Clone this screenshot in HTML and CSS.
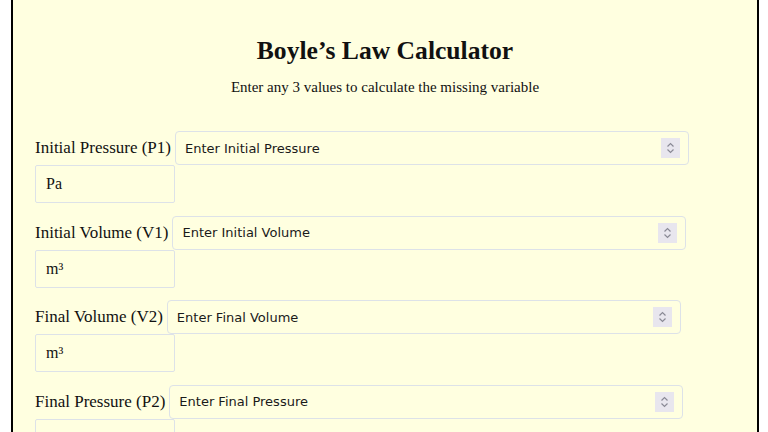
FILE: index.html
```html
<!DOCTYPE html>
<html lang="en">
<head>
    <meta charset="UTF-8">
    <meta name="viewport" content="width=device-width, initial-scale=1.0">
    <title>Boyle's Law Calculator</title>
    <link rel="stylesheet" href="styles.css">
</head>
<body>
    <div class="calculator">
        <h2>Boyle’s Law Calculator</h2>
        <p class="subtitle">Enter any 3 values to calculate the missing variable</p>

        <div class="group">
            <div class="line">
                <label for="p1">Initial Pressure (P1)</label>
                <div class="field">
                    <input type="text" id="p1" placeholder="Enter Initial Pressure">
                    <span class="spin"><svg viewBox="0 0 19 20" width="19" height="20"><path d="M6.5 8.5 9.5 5.5 12.5 8.5M6.5 11.5 9.5 14.5 12.5 11.5" fill="none" stroke="#8a8a96" stroke-width="1.2"/></svg></span>
                </div>
            </div>
            <div class="unit">Pa</div>
        </div>

        <div class="group">
            <div class="line">
                <label for="v1">Initial Volume (V1)</label>
                <div class="field">
                    <input type="text" id="v1" placeholder="Enter Initial Volume">
                    <span class="spin"><svg viewBox="0 0 19 20" width="19" height="20"><path d="M6.5 8.5 9.5 5.5 12.5 8.5M6.5 11.5 9.5 14.5 12.5 11.5" fill="none" stroke="#8a8a96" stroke-width="1.2"/></svg></span>
                </div>
            </div>
            <div class="unit">m³</div>
        </div>

        <div class="group">
            <div class="line">
                <label for="v2">Final Volume (V2)</label>
                <div class="field">
                    <input type="text" id="v2" placeholder="Enter Final Volume">
                    <span class="spin"><svg viewBox="0 0 19 20" width="19" height="20"><path d="M6.5 8.5 9.5 5.5 12.5 8.5M6.5 11.5 9.5 14.5 12.5 11.5" fill="none" stroke="#8a8a96" stroke-width="1.2"/></svg></span>
                </div>
            </div>
            <div class="unit">m³</div>
        </div>

        <div class="group">
            <div class="line">
                <label for="p2">Final Pressure (P2)</label>
                <div class="field">
                    <input type="text" id="p2" placeholder="Enter Final Pressure">
                    <span class="spin"><svg viewBox="0 0 19 20" width="19" height="20"><path d="M6.5 8.5 9.5 5.5 12.5 8.5M6.5 11.5 9.5 14.5 12.5 11.5" fill="none" stroke="#8a8a96" stroke-width="1.2"/></svg></span>
                </div>
            </div>
            <div class="unit">Pa</div>
        </div>
    </div>
</body>
</html>
```

FILE: styles.css
```css
body {
    font-family: 'Liberation Serif', 'Times New Roman', serif;
    margin: 0;
    padding: 0;
    background: #fff;
    color: #111;
}
.calculator {
    margin: 0 9px 0 11px;
    border: 2px solid #000;
    border-top: none;
    background: lightyellow;
    padding: 36px 22px 20px 22px;
}
.calculator h2 {
    font-size: 25.6px;
    text-align: center;
    margin: 0 0 13px 0;
}
.subtitle {
    font-size: 15px;
    text-align: center;
    margin: 0 0 35px 0;
}
.group {
    margin-bottom: 12.6px;
}
.line {
    display: flex;
    align-items: center;
    gap: 4px;
}
.line label {
    font-size: 17px;
}
.field {
    width: 495px;
    height: 32px;
    display: flex;
    align-items: center;
    border: 1px solid #dde2e8;
    border-radius: 4px;
    padding: 0 8px 0 9px;
}
.field input {
    flex: 1;
    border: none;
    background: transparent;
    font-family: 'DejaVu Sans', sans-serif;
    font-size: 13px;
    color: #111;
    padding: 0;
    outline: none;
}
.field input::placeholder {
    color: #1a1a1a;
}
.spin {
    width: 19px;
    height: 20px;
    background: #e8e6ee;
    display: flex;
}
.unit {
    width: 118px;
    height: 36px;
    line-height: 36px;
    border: 1px solid #dde2e8;
    border-radius: 2px;
    padding: 0 10px;
    font-size: 16px;
}
```
